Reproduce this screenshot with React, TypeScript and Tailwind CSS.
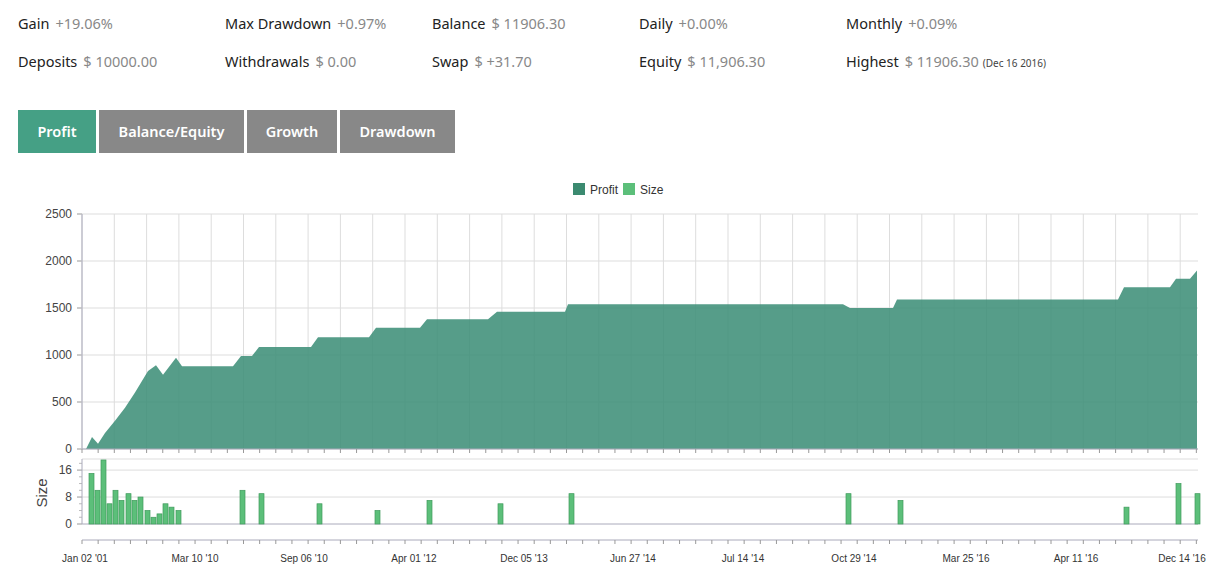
const stats = [
  [["Gain", "+19.06%"], ["Max Drawdown", "+0.97%"], ["Balance", "$ 11906.30"], ["Daily", "+0.00%"], ["Monthly", "+0.09%"]],
  [["Deposits", "$ 10000.00"], ["Withdrawals", "$ 0.00"], ["Swap", "$ +31.70"], ["Equity", "$ 11,906.30"], ["Highest", "$ 11906.30"]],
];

const tabs = [
  { label: "Profit", w: "w-[78px]", active: true },
  { label: "Balance/Equity", w: "w-[145px]" },
  { label: "Growth", w: "w-[90px]" },
  { label: "Drawdown", w: "w-[115px]" },
];

const profit: [number, number][] = [
  [86, 0], [92, 128], [98, 55], [105, 170], [115, 300], [125, 440], [135, 600], [148, 830], [156, 890], [163, 790],
  [176, 970], [182, 880], [233, 880], [241, 990], [252, 990], [259, 1085], [311, 1085], [318, 1190], [369, 1190],
  [376, 1290], [420, 1290], [427, 1380], [488, 1380], [497, 1460], [565, 1460], [568, 1540], [843, 1540], [850, 1500],
  [893, 1500], [897, 1590], [1118, 1590], [1124, 1720], [1170, 1720], [1176, 1810], [1190, 1810], [1197, 1900],
];

const bars: [number, number][] = [
  [89, 15], [95, 10], [101, 19], [107, 6], [113, 10], [119, 7], [126, 9], [132, 7], [138, 8], [145, 4], [151, 2],
  [157, 3], [163, 6], [169, 5], [176, 4], [240, 10], [259, 9], [317, 6], [375, 4], [427, 7], [498, 6], [569, 9],
  [846, 9], [898, 7], [1124, 5], [1176, 12], [1195, 9],
];

const labels: [number, string][] = [
  [85, "Jan 02 '01"], [195, "Mar 10 '10"], [304, "Sep 06 '10"], [414, "Apr 01 '12"], [524, "Dec 05 '13"],
  [633, "Jun 27 '14"], [743, "Jul 14 '14"], [854, "Oct 29 '14"], [966, "Mar 25 '16"], [1076, "Apr 11 '16"], [1182, "Dec 14 '16"],
];

const py = (v: number) => 452 - v * 0.094;
const sy = (v: number) => 527 - v * 3.37;
const cols = Array.from({ length: 35 }, (_, i) => 82 + i * 32.3);
const ticks = Array.from({ length: 70 }, (_, i) => 82 + i * 16.15);

function Chart() {
  const area = "M86,452 " + profit.map(([x, v]) => `L${x},${py(v)}`).join(" ") + " L1197,452 Z";
  return (
    <svg width="1229" height="407" viewBox="0 170 1229 407" className="block" style={{ fontFamily: "Arial, 'Liberation Sans', sans-serif" }}>
      <rect x="573" y="186" width="12" height="12" fill="#3b8a70" />
      <text x="590" y="197" fontSize="12" fill="#333">Profit</text>
      <rect x="623" y="186" width="12" height="12" fill="#5cbf7a" />
      <text x="640" y="197" fontSize="12" fill="#333">Size</text>

      {[0, 500, 1000, 1500, 2000, 2500].map((v) => (
        <g key={v}>
          <line x1="82" x2="1198" y1={py(v)} y2={py(v)} stroke="#ddd" />
          <line x1="77" x2="82" y1={py(v)} y2={py(v)} stroke="#999" />
          <text x="72" y={py(v) + 4} fontSize="12" fill="#444" textAnchor="end">{v}</text>
        </g>
      ))}
      {cols.map((x) => (
        <line key={x} x1={x} x2={x} y1="217" y2="452" stroke="#ddd" />
      ))}
      <path d={area} fill="#3d8f78" fillOpacity="0.87" />
      <line x1="82" x2="82" y1="217" y2="452" stroke="#aab" />
      <line x1="82" x2="1198" y1="452" y2="452" stroke="#aab" />
      {ticks.map((x) => (
        <line key={x} x1={x} x2={x} y1="452" y2="456" stroke="#999" />
      ))}

      <line x1="82" x2="1198" y1="462" y2="462" stroke="#ddd" />
      {[0, 8, 16].map((v) => (
        <g key={v}>
          <line x1="82" x2="1198" y1={sy(v)} y2={sy(v)} stroke={v === 0 ? "#aab" : "#ddd"} />
          <line x1="77" x2="82" y1={sy(v)} y2={sy(v)} stroke="#999" />
          <text x="72" y={sy(v) + 4} fontSize="12" fill="#444" textAnchor="end">{v}</text>
        </g>
      ))}
      {[2, 4, 6, 10, 12, 14, 18].map((v) => (
        <line key={v} x1="79" x2="82" y1={sy(v)} y2={sy(v)} stroke="#bbb" />
      ))}
      <line x1="82" x2="82" y1="462" y2="527" stroke="#aab" />
      <text x="47" y="496" fontSize="15" fill="#444" textAnchor="middle" transform="rotate(-90 47 496)">Size</text>
      {bars.map(([x, v]) => (
        <rect key={x} x={x} y={sy(v)} width="5" height={v * 3.37} fill="#5cbf7a" stroke="#3f9a5c" strokeWidth="0.7" />
      ))}

      <line x1="82" x2="1198" y1="543" y2="543" stroke="#aab" />
      {ticks.map((x) => (
        <line key={x} x1={x} x2={x} y1="543" y2="547" stroke="#999" />
      ))}
      {labels.map(([x, t]) => (
        <text key={t} x={x} y="565" fontSize="10" fill="#333" textAnchor="middle">{t}</text>
      ))}
    </svg>
  );
}

export default function App() {
  return (
    <div className="w-[1229px] h-[577px] overflow-hidden bg-white" style={{ fontFamily: "'Noto Sans', 'Open Sans', sans-serif" }}>
      <div className="pl-[18px] pt-[13px] flex flex-col gap-[16px]">
        {stats.map((row, ri) => (
          <div key={ri} className="flex h-[22px] items-center">
            {row.map(([k, v]) => (
              <div key={k} className="w-[207px] text-[14.5px] whitespace-nowrap">
                <span className="text-[#222]">{k}</span>
                <span className="ml-[6px] text-[#888]">{v}</span>
                {k === "Highest" && <span className="ml-1 text-[10px] text-[#444]">(Dec 16 2016)</span>}
              </div>
            ))}
          </div>
        ))}
      </div>
      <div className="flex gap-[3px] pl-[18px] mt-[37px]">
        {tabs.map((t) => (
          <div
            key={t.label}
            className={`${t.w} h-[43px] flex items-center justify-center text-white text-[14.5px] font-semibold ${t.active ? "bg-[#45a085]" : "bg-[#888888]"}`}
          >
            {t.label}
          </div>
        ))}
      </div>
      <div className="mt-[14px]">
        <Chart />
      </div>
    </div>
  );
}
